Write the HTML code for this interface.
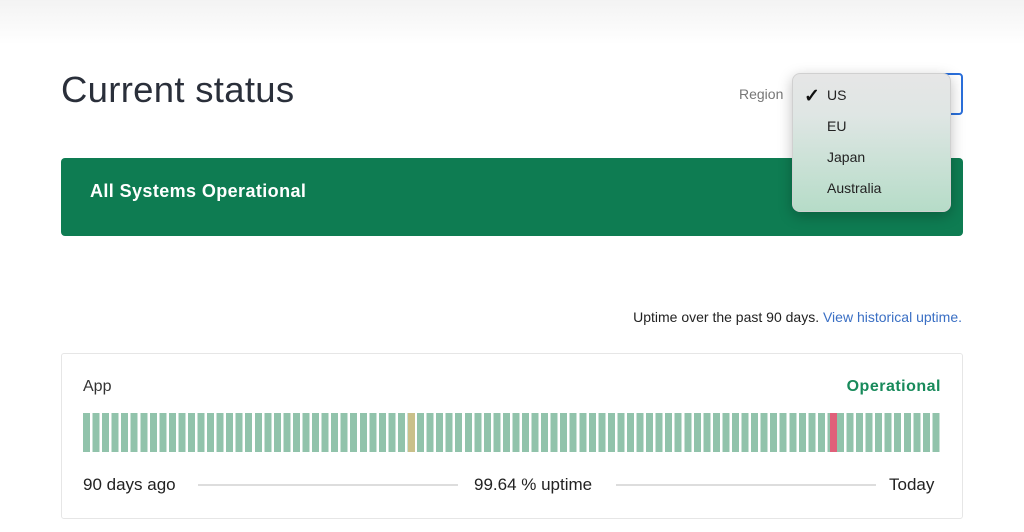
<!DOCTYPE html>
<html><head><meta charset="utf-8"><style>
*{margin:0;padding:0;box-sizing:border-box}
html,body{width:1024px;height:532px;overflow:hidden;background:#fff;font-family:"Liberation Sans",sans-serif;color:#222}
.top{position:absolute;left:0;top:0;width:1024px;height:45px;background:linear-gradient(#f3f3f3,#fff)}
h1{position:absolute;left:61px;top:69px;font-size:36.5px;font-weight:400;color:#2a2f3a;letter-spacing:0.3px}
.reglabel{position:absolute;left:739px;top:86px;font-size:14px;color:#777}
.select{position:absolute;left:800px;top:73px;width:163px;height:42px;border:2px solid #2a6fdb;border-radius:4px;background:#fff}
.menu{position:absolute;left:792px;top:73px;width:159px;height:139px;border-radius:8px;background:linear-gradient(#e6e6e6 0%,#dfe6e4 30%,#b6dcc8 100%);box-shadow:0 4px 14px rgba(0,0,0,.25);border:1px solid #d0d0d0}
.menu div{position:absolute;left:34px;font-size:14px;color:#222}
.check{position:absolute;left:11px;top:11px;font-size:19px;font-weight:700;color:#111}
.banner{position:absolute;left:61px;top:158px;width:902px;height:78px;background:#0e7c52;border-radius:4px}
.banner span{position:absolute;left:29px;top:23px;font-size:18px;font-weight:700;color:#fff;letter-spacing:0.4px}
.uptxt{position:absolute;right:62px;top:309px;font-size:14px;color:#222}
.uptxt a{color:#3a6fc4;text-decoration:none}
.card{position:absolute;left:61px;top:353px;width:902px;height:166px;border:1px solid #e6e6e6;border-radius:3px}
.app{position:absolute;left:83px;top:378px;font-size:16px;color:#333}
.op{position:absolute;right:83px;top:378px;font-size:16px;font-weight:700;color:#188a5b;letter-spacing:0.5px}
.bars{position:absolute;left:83px;top:413px;width:859px;height:39px;background:repeating-linear-gradient(90deg,#91c3ab 0,#91c3ab 7px,#fff 7px,#fff 9.544px)}
.b{position:absolute;top:413px;width:7px;height:39px}
.foot{position:absolute;top:475px;font-size:17px;color:#222}
.line{position:absolute;top:484px;height:2px;background:#ddd}
</style></head><body>
<div class="top"></div>
<h1>Current status</h1>
<div class="reglabel">Region</div>
<div class="select"></div>
<div class="banner"><span>All Systems Operational</span></div>
<div class="menu">
<span class="check">✓</span>
<div style="top:13px">US</div>
<div style="top:44px">EU</div>
<div style="top:75px">Japan</div>
<div style="top:106px">Australia</div>
</div>
<div class="uptxt">Uptime over the past 90 days. <a>View historical uptime.</a></div>
<div class="card"></div>
<div class="app">App</div>
<div class="op">Operational</div>
<div class="bars"></div>
<div class="b" style="left:407.5px;background:#c9c08a"></div>
<div class="b" style="left:829.5px;background:#e0607a"></div>
<div class="foot" style="left:83px">90 days ago</div>
<div class="line" style="left:198px;width:260px"></div>
<div class="foot" style="left:474px">99.64 % uptime</div>
<div class="line" style="left:616px;width:260px"></div>
<div class="foot" style="left:889px">Today</div>
</body></html>
